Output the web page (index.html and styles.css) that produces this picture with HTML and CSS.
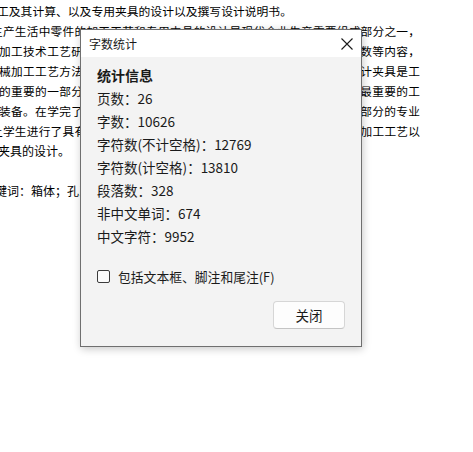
FILE: index.html
```html
<!DOCTYPE html>
<html lang="zh-CN">
<head>
<meta charset="utf-8">
<title>字数统计</title>
<link rel="stylesheet" href="styles.css">
</head>
<body>
<div class="doc">
  <div class="line l1">工及其计算、以及专用夹具的设计以及撰写设计说明书。</div>
  <div class="line just wide">生产生活中零件的加工工艺和专用夹具的设计是现代企业生产重要组成部分之一，</div>
  <div class="line just">加工技术工艺研究和设计，主要包括工序的安排、工艺装备、切削参数等内容，</div>
  <div class="line just">械加工工艺方法的基础上，结合企业实际生产的要求，进行合理地设计夹具是工</div>
  <div class="line just">的重要的一部分，而且也是机械加工中必不可少的工艺装备，夹具是最重要的工</div>
  <div class="line just">装备。在学完了机械制造技术基础、机械设计和专业基础课程以及大部分的专业</div>
  <div class="line just wide">让学生进行了具有一定综合性的课程设计，主要内容是箱体零件的机械加工工艺以</div>
  <div class="line l8">夹具的设计。</div>
  <div class="line blank"></div>
  <div class="line l9">关键词：箱体；孔系；夹具；工艺</div>
</div>

<div class="dialog">
  <div class="titlebar">
    <span class="title">字数统计</span>
    <svg class="close" width="12" height="12" viewBox="0 0 12 12">
      <path d="M0.5 0.5 L11.5 11.5 M11.5 0.5 L0.5 11.5" stroke="#1a1a1a" stroke-width="1.1" fill="none"/>
    </svg>
  </div>
  <div class="body">
    <div class="heading">统计信息</div>
    <div class="stat">页数：26</div>
    <div class="stat">字数：10626</div>
    <div class="stat">字符数(不计空格)：12769</div>
    <div class="stat">字符数(计空格)：13810</div>
    <div class="stat">段落数：328</div>
    <div class="stat">非中文单词：674</div>
    <div class="stat">中文字符：9952</div>
    <label class="check">
      <span class="box"></span>
      <span class="check-label">包括文本框、脚注和尾注(F)</span>
    </label>
    <div class="actions">
      <button class="btn">关闭</button>
    </div>
  </div>
</div>
</body>
</html>
```

FILE: styles.css
```css
html, body {
  margin: 0;
  padding: 0;
  background: #ffffff;
  width: 473px;
  height: 452px;
  overflow: hidden;
}

body {
  position: relative;
  font-family: "Noto Sans CJK SC", "Noto Sans", sans-serif;
  color: #000;
}

.doc {
  padding-top: 1px;
  font-size: 12px;
  line-height: 20px;
}

.line {
  white-space: nowrap;
  height: 20px;
}

.just {
  width: 421px;
  margin-left: -1px;
  font-size: 11.7px;
  text-align: justify;
  text-align-last: justify;
  white-space: normal;
  overflow: hidden;
}

.just.wide {
  width: 429px;
  margin-left: -9px;
}

.l1 { margin-left: -3px; font-size: 11.8px; }
.l8 { margin-left: -2px; }
.l9 { margin-left: -17px; }

.dialog {
  position: absolute;
  left: 80px;
  top: 29px;
  width: 282px;
  box-sizing: border-box;
  border: 1px solid #6f6f6f;
  background: #f3f3f3;
  box-shadow: 1px 2px 8px rgba(0, 0, 0, 0.22);
}

.titlebar {
  height: 27px;
  background: #ffffff;
  display: flex;
  align-items: center;
  justify-content: space-between;
  padding: 0 8px 0 8px;
}

.title {
  font-size: 12px;
  color: #1a1a1a;
  line-height: 16px;
}

.close {
  display: block;
  margin-top: 1px;
}

.body {
  padding: 7px 16px 17px 16px;
  font-size: 13.5px;
  line-height: 23px;
  color: #1a1a1a;
}

.heading {
  font-weight: bold;
  font-size: 14px;
}

.check {
  display: flex;
  align-items: center;
  margin-top: 17px;
  gap: 8px;
}

.check-label {
  font-size: 12.8px;
}

.box {
  width: 11px;
  height: 11px;
  border: 1px solid #3c3c3c;
  border-radius: 2px;
  background: #fbfbfb;
}

.actions {
  display: flex;
  justify-content: flex-end;
  margin-top: 13px;
}

.btn {
  width: 72px;
  height: 28px;
  box-sizing: border-box;
  border: 1px solid #d6d6d6;
  border-bottom-color: #c4c4c4;
  border-radius: 4px;
  background: #fdfdfd;
  font-family: "Noto Sans CJK SC", "Noto Sans", sans-serif;
  font-size: 13.5px;
  color: #1a1a1a;
  padding: 0;
}
```
